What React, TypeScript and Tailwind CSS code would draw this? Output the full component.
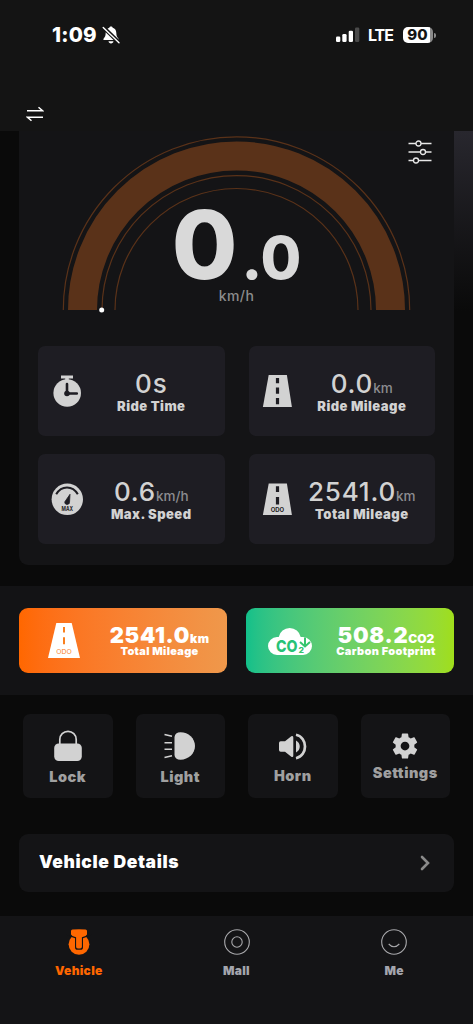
import React from 'react';

interface StatTileProps {
  icon: React.ReactNode;
  value: string;
  unit?: string;
  label: string;
}

interface ActionButtonProps {
  icon: React.ReactNode;
  label: string;
  labelClass?: string;
}

interface TabItemProps {
  icon: React.ReactNode;
  label: string;
  active?: boolean;
}

const BellOffIcon = () => (
  <svg width="18" height="18" viewBox="0 0 18 18">
    <path d="M9 .6c.9 0 1.5.5 1.7 1.2 2.3.7 3.5 2.5 3.6 5 .1 3 .6 4.2 2 5.6.7.8.3 1.7-.7 1.7H2.4c-1 0-1.4-.9-.7-1.7 1.4-1.4 1.9-2.6 2-5.600.1-2.500 1.300-4.300 3.600-5C7.500 1.100 8.100.6 9 .6Z" fill="#fff" />
    <path d="M6.500 15.200h5c-.2 1.400-1.200 2.200-2.500 2.200s-2.300-.8-2.500-2.200Z" fill="#fff" />
    <path d="M1 1l16.500 16" stroke="#141414" strokeWidth="4" />
    <path d="M1.200 1.400l15.800 15.400" stroke="#fff" strokeWidth="1.400" strokeLinecap="round" />
  </svg>
);

const SignalIcon = () => (
  <svg width="24" height="16" viewBox="0 0 24 16">
    <rect x="0" y="9.500" width="4.300" height="5.500" rx="1.300" fill="#fff" />
    <rect x="6.300" y="7" width="4.300" height="8" rx="1.300" fill="#fff" />
    <rect x="12.700" y="3.800" width="4.300" height="11.200" rx="1.300" fill="#fff" />
    <rect x="19" y="0.500" width="4.300" height="14.500" rx="1.300" fill="#4a4a4a" />
  </svg>
);

const SwapIcon = () => (
  <svg width="18" height="16" viewBox="0 0 18 16" fill="none" stroke="#fff" strokeWidth="1.500">
    <path d="M1 4.700h15.500L12.500 1.300" />
    <path d="M17 11.200H1.500L5.500 14.700" />
  </svg>
);

const SlidersIcon = () => (
  <svg width="24" height="24" viewBox="0 0 24 24" fill="none" stroke="#e8e8e8" strokeWidth="1.300">
    <path d="M.5 3.500H8M13 3.500h10.500M.5 12h12M17.500 12h6M.5 20.500H5.500M10.500 20.500h13" />
    <circle cx="10.500" cy="3.500" r="2.500" />
    <circle cx="15" cy="12" r="2.500" />
    <circle cx="8" cy="20.500" r="2.500" />
  </svg>
);

const StopwatchIcon = () => (
  <svg width="32" height="34" viewBox="0 0 32 34">
    <path d="M10 1.500h12v3h-4.200V7h-3.600V4.500H10Z" fill="#d2d2d2" />
    <circle cx="16.200" cy="19" r="13.800" fill="#d2d2d2" />
    <path d="M16 10v9.500h9.800" fill="none" stroke="#1e1d23" strokeWidth="2.600" strokeLinecap="round" />
    <circle cx="16" cy="19.500" r="2.800" fill="#1e1d23" />
  </svg>
);

const RoadIcon = () => (
  <svg width="32" height="34" viewBox="0 0 32 34">
    <path d="M6.700 1h18.200L29.900 33H.9Z" fill="#d2d2d2" />
    <path d="M13.900 3.900h3.200v5.300h-3.200ZM13.900 13.500h3.200v6.200h-3.200ZM13.900 24h3.200v6.200h-3.200Z" fill="#1e1d23" />
  </svg>
);

const OdoIcon = () => (
  <svg width="32" height="34" viewBox="0 0 32 34">
    <path d="M6.700 1.500h18.200L29.900 33H.9Z" fill="#d2d2d2" />
    <path d="M13.900 4.300h3.200v5.700h-3.200ZM13.900 15h3.200v7.500h-3.200Z" fill="#1e1d23" />
    <text x="15.400" y="30" textAnchor="middle" textLength="13.500" lengthAdjust="spacingAndGlyphs" className="font-['Inter'] font-bold" fontSize="6" fill="#1e1d23">ODO</text>
  </svg>
);

const MaxSpeedIcon = () => (
  <svg width="32" height="34" viewBox="0 0 32 34">
    <circle cx="16.300" cy="17.300" r="15.700" fill="#d2d2d2" />
    <path d="M5.200 12.200C10.500 3.200 21.500 3.200 26.800 12.200" fill="none" stroke="#1e1d23" strokeWidth="2" />
    <path d="M19 12.300l-.5 8.200c-.3 3-5.500 2.500-4.600-.8Z" fill="#1e1d23" stroke="#1e1d23" strokeWidth=".8" strokeLinejoin="round" />
    <text x="16.300" y="29.300" textAnchor="middle" textLength="11.500" lengthAdjust="spacingAndGlyphs" className="font-['Inter'] font-bold" fontSize="5.500" fill="#1e1d23">MAX</text>
  </svg>
);

const OdoWhiteIcon = () => (
  <svg className="shrink-0" width="32" height="35" viewBox="0 0 32 35">
    <path d="M8.300 0h15.400L32 35H0Z" fill="#fff" />
    <path d="M15 4h2v5.500h-2ZM15 14.300h2v7h-2Z" fill="#f9801f" />
    <text x="16" y="31" textAnchor="middle" textLength="15.500" lengthAdjust="spacingAndGlyphs" className="font-['Inter']" fontSize="6.500" fill="#f9801f">ODO</text>
  </svg>
);

const CarbonIcon = () => (
  <svg className="shrink-0" width="44" height="28" viewBox="0 0 44 28">
    <path d="M9 28a9 9 0 0 1 0-18h1.700a11.200 11.200 0 0 1 22 0H35a9 9 0 0 1 0 18Z" fill="#fff" />
    <text x="8" y="25.300" textLength="21.500" lengthAdjust="spacingAndGlyphs" className="font-['Inter'] font-extrabold" fontSize="16" fill="#27c277">CO</text>
    <text x="30.500" y="26.300" textLength="5.500" lengthAdjust="spacingAndGlyphs" className="font-['Inter'] font-extrabold" fontSize="7" fill="#35c56e">2</text>
    <path d="M37 10.500v8M32 15l5 4.500 5-4.500" fill="none" stroke="#35c56e" strokeWidth="2" />
  </svg>
);

const LockIcon = () => (
  <svg width="28" height="32" viewBox="0 0 28 32">
    <path d="M5.800 14V9.500a8.200 8.200 0 0 1 16.400 0V14" fill="none" stroke="#d2d2d2" strokeWidth="1.700" />
    <rect x=".2" y="13.500" width="27.600" height="17.500" rx="4.500" fill="#d2d2d2" />
  </svg>
);

const LightIcon = () => (
  <svg width="32" height="28" viewBox="0 0 32 28">
    <path d="M10.500 5Q11 .3 16.500.3C24.500.3 31 6.500 31 14s-6.500 13.700-14.500 13.700Q11 27.700 10.500 23Z" fill="#d2d2d2" />
    <path d="M.5 2.500l7.500 1.800M.5 10.800H8M.5 17.200H8M.5 25.500L8 23.700" stroke="#d2d2d2" strokeWidth="1.500" />
  </svg>
);

const HornIcon = () => (
  <svg width="28" height="27" viewBox="0 0 28 27">
    <path d="M0 10Q0 8.300 1.700 8.300H6L12.300 3.300Q14.300 2.300 14.300 4.500v18q0 2.300-2 1.200L6 18.700H1.700Q0 18.700 0 17Z" fill="#d2d2d2" />
    <path d="M17 7.500c5 2.500 5 9.500 0 12Z" fill="#d2d2d2" />
    <path d="M17 1.800c12 2.500 12 20.900 0 23.400" fill="none" stroke="#d2d2d2" strokeWidth="2.700" />
  </svg>
);

const GearIcon = () => (
  <svg width="30" height="30" viewBox="0 0 24 24">
    <path
      fill="#d2d2d2"
      d="M19.430 12.980c.04-.32.070-.64.070-.98s-.03-.66-.07-.98l2.110-1.650c.19-.15.24-.42.12-.64l-2-3.460c-.12-.22-.39-.3-.61-.22l-2.490 1c-.52-.4-1.080-.73-1.690-.98l-.38-2.650C14.460 2.180 14.250 2 14 2h-4c-.25 0-.46.18-.49.42l-.38 2.650c-.61.25-1.170.59-1.690.98l-2.490-1c-.23-.09-.49 0-.61.22l-2 3.460c-.13.22-.07.49.12.64l2.110 1.650c-.04.32-.07.65-.07.98s.03.66.07.98l-2.110 1.650c-.19.15-.24.42-.12.64l2 3.460c.12.22.39.3.61.22l2.490-1c.52.4 1.080.73 1.690.98l.38 2.650c.03.24.24.42.49.42h4c.25 0 .46-.18.49-.42l.38-2.650c.61-.25 1.170-.59 1.690-.98l2.490 1c.23.09.49 0 .61-.22l2-3.460c.12-.22.07-.49-.12-.64zM12 15.500c-1.930 0-3.500-1.570-3.500-3.500s1.570-3.500 3.500-3.500 3.500 1.570 3.500 3.500-1.570 3.500-3.500 3.500"
    />
  </svg>
);

const VehicleIcon = () => (
  <svg width="26" height="26" viewBox="0 0 26 26">
    <circle cx="13" cy="15.300" r="10.400" fill="#ff6700" />
    <path d="M0 0h26v5.500L20.500 8 17 9.300v8.900q0 2.600-2.500 2.600h-3Q9 20.800 9 18.200V9.300L5.500 8 0 5.500Z" fill="#141416" />
    <path d="M5 2Q5 .7 6.500.6q6.500-.8 13 0Q21 .7 21 2v3.500L19.500 7l-3.600 1.300v9.500q0 1.800-1.800 1.800h-2.200q-1.800 0-1.800-1.800V8.300L6.500 7 5 5.500Z" fill="#ff6700" />
  </svg>
);

const MallIcon = () => (
  <svg width="26" height="26" viewBox="0 0 26 26" fill="none" stroke="#a9a9ac" strokeWidth="1.100">
    <circle cx="13" cy="13" r="12.300" />
    <circle cx="13" cy="13" r="5.200" />
  </svg>
);

const MeIcon = () => (
  <svg width="26" height="26" viewBox="0 0 26 26" fill="none" stroke="#a9a9ac" strokeWidth="1.100">
    <circle cx="13" cy="13" r="12.300" />
    <path d="M7.700 15q5.300 5.500 10.600 0" />
  </svg>
);

const Gauge = () => (
  <svg className="col-start-1 row-start-1" width="435" height="190" viewBox="19 131 435 190" fill="none" stroke="#5a3219">
    <path d="M63.300 310a173.200 173.200 0 0 1 346.400 0" strokeWidth="1.200" />
    <path d="M82.500 310a154 154 0 0 1 308 0" strokeWidth="29" />
    <path d="M102 310a134.500 134.500 0 0 1 269 0" strokeWidth="1.200" />
    <path d="M115 310a121.500 121.500 0 0 1 243 0" strokeWidth="1.200" />
    <circle cx="101.700" cy="310" r="2.500" fill="#fff" stroke="none" />
  </svg>
);

const StatTile: React.FC<StatTileProps> = ({ icon, value, unit, label }) => (
  <div className="flex h-[90px] items-center rounded-[7px] bg-[#1e1d23] pr-[5px] pl-[13px]">
    <div className="w-8 shrink-0">{icon}</div>
    <div className="flex-1 pt-[2px] whitespace-nowrap text-[#d2d2d2]">
      <div className="flex h-7 items-baseline justify-center text-[26px] leading-[28px] font-medium">
        <span className="tracking-[0.800px]">{value}</span>
        {unit && <span className="text-[13.500px] text-[#8c8c90]">{unit}</span>}
      </div>
      <div className="text-center text-[13px] leading-[17px] font-black tracking-[0.450px]">{label}</div>
    </div>
  </div>
);

const ActionButton: React.FC<ActionButtonProps> = ({ icon, label, labelClass = 'mt-1' }) => (
  <div className="flex h-[84px] flex-col items-center rounded-[7px] bg-[#141416] pt-4">
    <div className="flex h-8 items-center justify-center">{icon}</div>
    <div className={`text-[14.500px] leading-5 font-black tracking-[0.500px] text-[#a0a0a0] ${labelClass}`}>{label}</div>
  </div>
);

const TabItem: React.FC<TabItemProps> = ({ icon, label, active }) => (
  <div className="flex flex-1 flex-col items-center pt-[13px]">
    {icon}
    <span className={`mt-2 text-[12px] leading-4 font-black tracking-[0.300px] ${active ? 'text-[#ff6700]' : 'text-[#a4a6ae]'}`}>
      {label}
    </span>
  </div>
);

const App: React.FC = () => {
  return (
    <div className="flex h-[1024px] w-[473px] flex-col overflow-hidden bg-[#0a0a0a] font-['Inter',sans-serif]">
      <header className="h-[131px] shrink-0 bg-[#141414]">
        <div className="flex h-[70px] items-center pl-[52px] pr-[37px] text-white">
          <span className="text-[20.500px] leading-6 font-extrabold tracking-[0.200px]">1:09</span>
          <span className="ml-[5px]">
            <BellOffIcon />
          </span>
          <div className="ml-auto flex items-center">
            <SignalIcon />
            <span className="mr-2 ml-2 w-[27px] text-[16px] font-bold tracking-[-1px]">LTE</span>
            <div className="flex h-4 w-[30px] items-center justify-center rounded-[5px] bg-[linear-gradient(90deg,#fff_90%,#8a8a8a_90%)] pr-px text-[15px] font-extrabold text-[#141414]">
              90
            </div>
            <div className="ml-px h-[5px] w-[2px] rounded-r-full bg-[#8a8a8a]" />
          </div>
        </div>
        <div className="pt-[36px] pl-[26px]">
          <SwapIcon />
        </div>
      </header>

      <section className="flex h-[434px] shrink-0">
        <div className="ml-[19px] w-[435px] rounded-b-[9px] bg-[#141416]">
          <div className="grid h-[215px] grid-cols-1">
            <Gauge />
            <div className="col-start-1 row-start-1 flex flex-col items-center pt-[69px]">
              <div className="flex h-[86px] items-baseline leading-[90px] font-extrabold text-[#d9d9d9]">
                <span className="text-[95px]">0</span>
                <span className="ml-1 text-[59px]">.0</span>
              </div>
              <div className="text-[14px] leading-5 font-medium tracking-[0.400px] text-[#8c8c8c]">km/h</div>
            </div>
            <div className="col-start-1 row-start-1 justify-self-end pt-[9px] pr-[22px]">
              <SlidersIcon />
            </div>
          </div>
          <div className="grid grid-cols-2 gap-x-6 gap-y-[18px] px-[19px]">
            <StatTile icon={<StopwatchIcon />} value="0s" label="Ride Time" />
            <StatTile icon={<RoadIcon />} value="0.0" unit="km" label="Ride Mileage" />
            <StatTile icon={<MaxSpeedIcon />} value="0.6" unit="km/h" label="Max. Speed" />
            <StatTile icon={<OdoIcon />} value="2541.0" unit="km" label="Total Mileage" />
          </div>
        </div>
        <div className="h-[180px] flex-1 bg-linear-to-b from-[#28272e] to-[#0a0a0a]" />
      </section>

      <section className="mt-[21px] grid h-[109px] shrink-0 grid-cols-2 gap-[19px] bg-[#131315] px-[19px] pt-[22px] text-white">
        <div className="flex h-[65px] items-center rounded-[9px] bg-linear-to-r from-[#ff6700] to-[#ef984b] pl-[29px]">
          <OdoWhiteIcon />
          <div className="flex-1 pl-3 whitespace-nowrap">
            <div className="flex h-[22px] items-baseline justify-center text-[22px] leading-[22px] font-black">
              <span className="tracking-[0.700px]">2541.0</span>
              <span className="text-[12px] tracking-[0.300px]">km</span>
            </div>
            <div className="text-center text-[11px] leading-[11px] font-black tracking-[0.300px]">Total Mileage</div>
          </div>
        </div>
        <div className="flex h-[65px] items-center rounded-[9px] bg-linear-to-r from-[#11c08a] to-[#a0de1a] pl-[22px]">
          <CarbonIcon />
          <div className="flex-1 pl-[6px] whitespace-nowrap">
            <div className="flex h-[22px] items-baseline justify-center text-[22px] leading-[22px] font-black">
              <span className="tracking-[0.700px]">508.2</span>
              <span className="text-[12px]">CO2</span>
            </div>
            <div className="text-center text-[11px] leading-[11px] font-black tracking-[0.350px]">Carbon Footprint</div>
          </div>
        </div>
      </section>

      <section className="mt-[19px] grid shrink-0 grid-cols-4 gap-[23px] px-[23px]">
        <ActionButton icon={<LockIcon />} label="Lock" labelClass="mt-[5px]" />
        <ActionButton icon={<LightIcon />} label="Light" labelClass="mt-[5px]" />
        <ActionButton icon={<HornIcon />} label="Horn" />
        <ActionButton icon={<GearIcon />} label="Settings" labelClass="mt-px" />
      </section>

      <section className="mx-[19px] mt-9 flex h-[58px] shrink-0 items-center justify-between rounded-[9px] bg-[#141416] pr-6 pl-5">
        <span className="pb-px text-[17.500px] font-black tracking-[0.600px] text-white">Vehicle Details</span>
        <svg width="10" height="16" viewBox="0 0 10 16" fill="none" stroke="#8a8a8a" strokeWidth="2.600" strokeLinecap="round">
          <path d="M2 2l6 6-6 6" />
        </svg>
      </section>

      <nav className="mt-6 flex flex-1 bg-[#141416]">
        <TabItem icon={<VehicleIcon />} label="Vehicle" active />
        <TabItem icon={<MallIcon />} label="Mall" />
        <TabItem icon={<MeIcon />} label="Me" />
      </nav>
    </div>
  );
};

export default App;
